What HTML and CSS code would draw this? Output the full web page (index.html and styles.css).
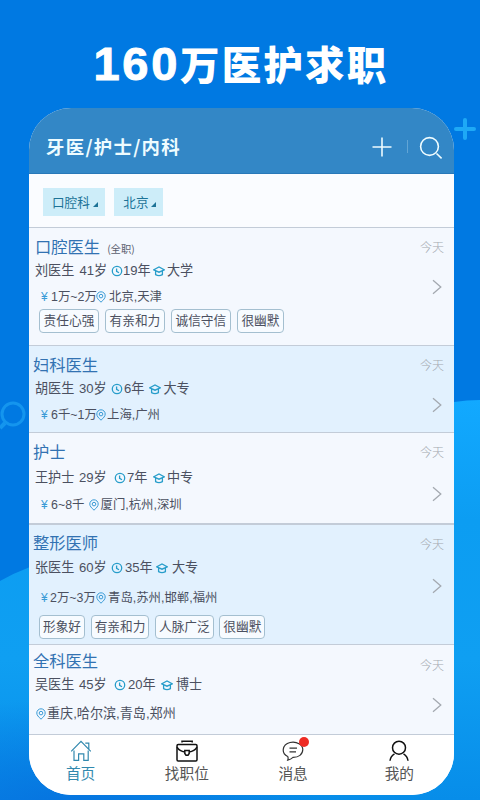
FILE: index.html
```
<!DOCTYPE html>
<html lang="zh-CN">

<head>
    <meta charset="UTF-8">
    <meta name="viewport" content="width=device-width, initial-scale=1.0">
    <title>160万医护求职</title>

    <link rel="stylesheet" href="styles.css">
</head>

<body>
    <!-- shared icons -->
    <svg class="sprite" aria-hidden="true">
        <symbol id="clock" viewBox="0 0 12 12">
            <circle cx="6" cy="6" r="4.7" />
            <path d="M5.6 3.4V6.3L8 7.7" />
        </symbol>
        <symbol id="cap" viewBox="0 0 12 12">
            <path d="M.8 4.8 6 2 11.2 4.8 6 7.2ZM2.6 6V9.6C4.6 10.8 7.4 10.8 9.4 9.6V6" />
        </symbol>
        <symbol id="pin" viewBox="0 0 12 12">
            <path d="M6 11.2C3.4 8.8 1.8 7.2 1.8 5A4.2 4.2 0 0 1 10.2 5C10.2 7.2 8.6 8.8 6 11.2Z" />
            <circle cx="6" cy="5.1" r="1.8" />
        </symbol>
        <symbol id="chevron" viewBox="0 0 10 16">
            <path d="M1 1.2 8.8 8 1 14.8" />
        </symbol>
    </svg>

    <svg class="backdrop" viewBox="0 0 480 800" aria-hidden="true">
        <defs>
            <linearGradient id="wave" x1="0" y1="0" x2="0" y2="1">
                <stop offset="0" stop-color="#12a9ff" />
                <stop offset="0.3" stop-color="#0c9df2" />
                <stop offset="0.65" stop-color="#0f9ff2" />
                <stop offset="1" stop-color="#078de9" />
            </linearGradient>
            <radialGradient id="corner">
                <stop offset="0" stop-color="#0673df" />
                <stop offset="1" stop-color="#0673df" stop-opacity="0" />
            </radialGradient>
        </defs>
        <path fill="url(#wave)" d="M0 581Q14 573 30 567C150 540 260 405 454 402Q467 400 480 400V800H0Z" />
        <ellipse fill="url(#corner)" cx="60" cy="810" rx="260" ry="110" />
        <g fill="none" stroke="#1495ee" stroke-width="3">
            <circle cx="13" cy="414" r="11" />
            <path d="M5 423 0 428" stroke-width="4" />
        </g>
        <path d="M465 120V138M456 129H474" stroke="#1ea9f6" stroke-width="4" stroke-linecap="round" />
    </svg>

    <h1><span class="number">160</span>万医护求职</h1>

    <main class="phone">
        <header>
            <h2>牙医/护士/内科</h2>
            <svg class="plus" viewBox="0 0 20 20"><path d="M10 .5V19.5M.5 10H19.5" /></svg>
            <span class="divider"></span>
            <svg class="search" viewBox="0 0 24 24"><circle cx="10.5" cy="10.5" r="8.9" /><path d="M17.5 17.5 22.6 22.3" /></svg>
        </header>

        <nav class="filters">
            <span class="chip">口腔科<i></i></span>
            <span class="chip">北京<i></i></span>
        </nav>

        <article class="job dentist">
            <div class="info">
                <h3>口腔医生<small>(全职)</small></h3>
                <div class="meta">
                    <span>刘医生</span><span>41岁</span>
                    <svg><use href="#clock" /></svg><span>19年</span>
                    <svg><use href="#cap" /></svg><span>大学</span>
                </div>
                <div class="pay">
                    <b>¥</b><span>1万~2万</span>
                    <svg><use href="#pin" /></svg><span>北京,天津</span>
                </div>
                <div class="tags"><span>责任心强</span><span>有亲和力</span><span>诚信守信</span><span>很幽默</span></div>
            </div>
            <div class="side"><time>今天</time><svg><use href="#chevron" /></svg></div>
        </article>

        <article class="job gynecology">
            <div class="info">
                <h3>妇科医生</h3>
                <div class="meta">
                    <span>胡医生</span><span>30岁</span>
                    <svg><use href="#clock" /></svg><span>6年</span>
                    <svg><use href="#cap" /></svg><span>大专</span>
                </div>
                <div class="pay">
                    <b>¥</b><span>6千~1万</span>
                    <svg><use href="#pin" /></svg><span>上海,广州</span>
                </div>
            </div>
            <div class="side"><time>今天</time><svg><use href="#chevron" /></svg></div>
        </article>

        <article class="job nurse">
            <div class="info">
                <h3>护士</h3>
                <div class="meta">
                    <span>王护士</span><span>29岁</span>
                    <svg><use href="#clock" /></svg><span>7年</span>
                    <svg><use href="#cap" /></svg><span>中专</span>
                </div>
                <div class="pay">
                    <b>¥</b><span>6~8千</span>
                    <svg><use href="#pin" /></svg><span>厦门,杭州,深圳</span>
                </div>
            </div>
            <div class="side"><time>今天</time><svg><use href="#chevron" /></svg></div>
        </article>

        <article class="job plastic">
            <div class="info">
                <h3>整形医师</h3>
                <div class="meta">
                    <span>张医生</span><span>60岁</span>
                    <svg><use href="#clock" /></svg><span>35年</span>
                    <svg><use href="#cap" /></svg><span>大专</span>
                </div>
                <div class="pay">
                    <b>¥</b><span>2万~3万</span>
                    <svg><use href="#pin" /></svg><span>青岛,苏州,邯郸,福州</span>
                </div>
                <div class="tags"><span>形象好</span><span>有亲和力</span><span>人脉广泛</span><span>很幽默</span></div>
            </div>
            <div class="side"><time>今天</time><svg><use href="#chevron" /></svg></div>
        </article>

        <article class="job general">
            <div class="info">
                <h3>全科医生</h3>
                <div class="meta">
                    <span>吴医生</span><span>45岁</span>
                    <svg><use href="#clock" /></svg><span>20年</span>
                    <svg><use href="#cap" /></svg><span>博士</span>
                </div>
                <div class="pay">
                    <svg><use href="#pin" /></svg><span>重庆,哈尔滨,青岛,郑州</span>
                </div>
            </div>
            <div class="side"><time>今天</time><svg><use href="#chevron" /></svg></div>
        </article>

        <footer>
            <a class="tab active">
                <svg viewBox="0 0 22 22"><path d="M1.2 11.4 11 1.4 20.8 11.4M15.3 3.2H18.8V9M4 10.5V20.4H8.6V13.8H13.8V20.4H18.2V10.5" /></svg>
                首页
            </a>
            <a class="tab">
                <svg class="bold" viewBox="0 0 22 22"><rect x="1" y="4.5" width="20" height="16.5" rx="1.2" /><path d="M6 2.6V1.2H16.2V2.6M1 7.2C3 10.5 5.5 11.6 8.8 11.9M21 7.2C19 10.5 16.5 11.6 13.2 11.9M8.8 10.5H13.2V13.5L12 15.2H10L8.8 13.5Z" /></svg>
                找职位
            </a>
            <a class="tab">
                <svg viewBox="0 0 22 22"><path d="M5.7 20.2C6.3 18.8 6.2 17.5 5.7 16.5C-1 13.5-.1 4.5 8 2.5C15 1 20.8 5 20.8 9.6C20.8 14.5 16.5 17.5 11 17.4C9.5 18.8 7.8 19.7 5.7 20.2Z" /><path d="M7.5 8.2H15M7.5 11.8H14" /></svg>
                <span class="dot"></span>
                消息
            </a>
            <a class="tab">
                <svg class="bold" viewBox="0 0 22 22"><circle cx="11" cy="7.7" r="6.5" /><path d="M2 20.8C2.3 17.5 4 15.2 6.5 13.8M20 20.8C19.7 17.5 18 15.2 15.5 13.8" /></svg>
                我的
            </a>
        </footer>
    </main>
</body>

</html>
```
FILE: styles.css
```
* {
    box-sizing: border-box;
}

html,
body {
    padding: 0;
    margin: 0;
}

body {
    width: 480px;
    height: 800px;
    overflow: hidden;
    position: relative;
    background-color: #0079e2;
    font-family: "Liberation Sans", "Noto Sans CJK SC", sans-serif;
    color: #4b5060;
}

h1,
h2,
h3 {
    margin: 0;
    font-weight: normal;
}

svg {
    display: block;
    fill: none;
    stroke: currentColor;
}

.sprite {
    position: absolute;
    width: 0;
    height: 0;
}

.backdrop {
    position: absolute;
    top: 0;
    left: 0;
    width: 480px;
    height: 800px;
    stroke: none;
}

h1 {
    position: relative;
    display: flex;
    justify-content: center;
    align-items: center;
    height: 108px;
    padding: 17px 0 0 2px;
    color: white;
    font: 900 39.5px/60px "Noto Sans CJK SC", sans-serif;
    letter-spacing: 2.2px;
}

.number {
    padding-top: 3px;
    font: bold 47px/60px "Liberation Sans", sans-serif;
    letter-spacing: 2.7px;
    -webkit-text-stroke: 1px white;
}

.phone {
    position: relative;
    width: 425px;
    height: 687px;
    margin-left: 29px;
    border-radius: 42px;
    overflow: hidden;
    background-color: #f4f8fe;
}

header {
    display: flex;
    align-items: center;
    height: 66px;
    padding: 12px 11px 0 17px;
    background-color: #3387c6;
    border-bottom: 1px solid #2878b8;
    color: #eefcff;
}

h2 {
    flex: 1;
    padding-bottom: 2px;
    font: bold 18.4px/26px "Noto Sans CJK SC", sans-serif;
    letter-spacing: 1.3px;
}

.plus {
    width: 20px;
    height: 20px;
    stroke-width: 1.6;
}

.divider {
    width: 1px;
    height: 13px;
    margin: 0 11px 0 15px;
    background-color: #62a5d5;
}

.search {
    width: 24px;
    height: 24px;
    margin-top: 2px;
    stroke-width: 1.6;
}

.filters {
    display: flex;
    gap: 9px;
    height: 53px;
    padding: 14px 13.5px;
    background-color: #fafcff;
}

.chip {
    display: flex;
    height: 28px;
    padding: 0 7px 0 9.5px;
    background-color: #cdedf9;
    color: #1c7397;
    font: 12.6px/28px "Noto Sans CJK SC", sans-serif;
}

.chip i {
    align-self: flex-end;
    margin: 0 0 9px 3px;
    border-left: 5px solid transparent;
    border-bottom: 5px solid #1c7397;
}

.job {
    display: flex;
    justify-content: space-between;
    border-top: 1px solid #c3ccd8;
}

.info {
    display: grid;
    align-content: start;
    align-items: center;
}

h3 {
    padding-left: 4px;
    color: #3272b2;
    font: 16.3px/24px "Noto Sans CJK SC", sans-serif;
}

h3 small {
    margin-left: 7px;
    color: #5b6070;
    font-size: 10.3px;
}

.meta,
.pay {
    display: grid;
    align-items: center;
    padding-left: 6px;
    font-size: 13.1px;
    line-height: 20px;
    white-space: nowrap;
}

.pay {
    padding-left: 12px;
    font-size: 12.4px;
}

.meta svg,
.pay svg {
    width: 12px;
    height: 12px;
    color: #279dca;
    stroke-width: 1.3;
}

.pay svg {
    color: #3a9bd6;
    stroke-width: 1;
}

.pay b {
    color: #3a9bd6;
    font: 12px/20px "Liberation Sans", sans-serif;
}

.tags {
    display: flex;
    gap: 6px;
    padding-left: 10px;
}

.tags span {
    height: 24px;
    padding: 0 3.6px;
    border: 1px solid #a4bfd0;
    border-radius: 4px;
    background-color: #f7fbff;
    font-size: 12.7px;
    line-height: 22px;
}

.side {
    display: flex;
    flex-direction: column;
    justify-content: space-between;
    align-items: flex-end;
    padding-right: 10px;
    color: #a4a9b0;
}

.side time {
    font: 300 12px/18px "Noto Sans CJK SC", sans-serif;
}

.side svg {
    width: 10px;
    height: 16px;
    margin-right: 2px;
    stroke-width: 1.3;
}

.dentist {
    height: 118px;
}

.dentist .info {
    padding-top: 7px;
    grid-template-rows: 24px 23px 28px 22px;
}

.dentist h3 {
    padding-left: 6px;
}

.dentist .meta {
    grid-template-columns: 44.5px 31px 12.5px 30px 14px auto;
}

.dentist .pay {
    grid-template-columns: 10px 44px 14px auto;
    padding-top: 1px;
}

.dentist .side {
    padding-top: 10px;
    padding-bottom: 50px;
}

.gynecology {
    height: 87px;
    background-color: #e2f1fe;
}

.gynecology .info {
    padding-top: 6px;
    grid-template-rows: 24px 26px 26px;
}

.gynecology .meta {
    grid-template-columns: 44px 32px 13px 24.5px 15px auto;
}

.gynecology .pay {
    grid-template-columns: 10px 44px 12px auto;
}

.gynecology .side {
    padding-top: 10px;
    padding-bottom: 19px;
}

.nurse {
    height: 92px;
}

.nurse .info {
    padding-top: 6px;
    grid-template-rows: 24px 29px 25px;
}

.nurse .meta {
    grid-template-columns: 44px 35px 13px 26px 14px auto;
}

.nurse .pay {
    grid-template-columns: 10px 37px 12.5px auto;
}

.nurse .side {
    padding-top: 10px;
    padding-bottom: 22px;
}

.plastic {
    height: 121px;
    background-color: #e2f1fe;
    border-top: 2px solid #c3ccd8;
    margin-top: -1px;
}

.plastic .info {
    padding-top: 5px;
    grid-template-rows: 24px 27px 34px 24px;
}

.plastic .meta {
    grid-template-columns: 44px 32px 14px 31px 16px auto;
}

.plastic .pay {
    grid-template-columns: 9px 45px 13px auto;
}

.plastic .tags {
    gap: 5.6px;
}

.plastic .tags span {
    padding: 0 3px;
}

.plastic .side {
    padding-top: 10px;
    padding-bottom: 50px;
}

.general {
    height: 90px;
}

.general .info {
    padding-top: 3px;
    grid-template-rows: 24px 26px 32px;
}

.general .meta {
    grid-template-columns: 44px 35px 14px 33px 15px auto;
}

.general .pay {
    grid-template-columns: 12px auto;
    padding-left: 6px;
    font-size: 13.1px;
}

.general .side {
    padding-top: 11px;
    padding-bottom: 21px;
}

footer {
    display: flex;
    height: 61px;
    border-top: 1px solid #c3ccd8;
    background-color: white;
}

.tab {
    position: relative;
    flex: 1 1 0;
    display: flex;
    flex-direction: column;
    align-items: center;
    padding: 5px 3px 0 0;
    color: #555;
    font: 14.7px/22px "Noto Sans CJK SC", sans-serif;
}

.tab svg {
    width: 22px;
    height: 22px;
    color: #333;
    stroke-width: 1.2;
}

.tab .bold {
    color: #111;
    stroke-width: 1.5;
}

.tab.active,
.tab.active svg {
    color: #3289ae;
}

.dot {
    position: absolute;
    top: 2px;
    left: 57px;
    width: 10px;
    height: 10px;
    border-radius: 50%;
    background-color: #ee2b24;
}
```
